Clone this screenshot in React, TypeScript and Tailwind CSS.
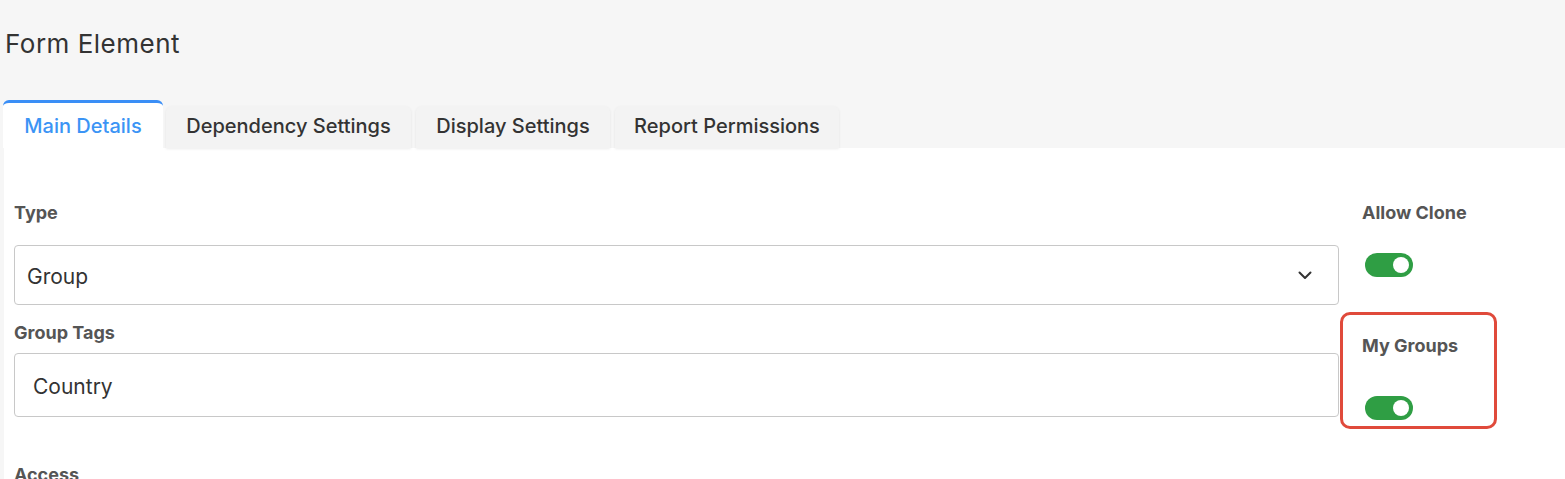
import React from "react";

function Toggle() {
  return (
    <div className="relative h-[24px] w-[48px] rounded-full bg-[#2f9e44]">
      <div className="absolute right-[4px] top-[4px] h-[16px] w-[16px] rounded-full bg-white" />
    </div>
  );
}

export default function App() {
  const tabs = [
    { label: "Dependency Settings", w: "w-[245px]" },
    { label: "Display Settings", w: "w-[194px]" },
    { label: "Report Permissions", w: "w-[224px]" },
  ];
  return (
    <div className="min-h-[479px] bg-[#f6f6f6] font-['Inter',sans-serif]">
      <div className="pl-[5px] pt-[28px] text-[26px] leading-[32px] tracking-[0.5px] text-[#333]">Form Element</div>
      <div className="mt-[40px] flex items-end pl-[3px]">
        <div className="flex h-[48px] w-[160px] items-center justify-center rounded-t-[6px] border-t-[3px] border-[#3a8ef6] bg-white text-[20px] font-medium text-[#3b94f5]">
          Main Details
        </div>
        {tabs.map((t, i) => (
          <div
            key={t.label}
            className={`${t.w} ${i === 0 ? "ml-[3px]" : "ml-[5px]"} flex h-[42px] items-center justify-center rounded-t-[6px] bg-[#f3f3f3] pb-[3px] text-[20px] font-medium text-[#333] shadow-[0_1px_3px_rgba(0,0,0,0.08)]`}
          >
            {t.label}
          </div>
        ))}
      </div>
      <div className="ml-[4px] flex h-[331px] bg-white pl-[10px]">
        <div className="w-[1325px] pt-[53px]">
          <div className="text-[18px] font-bold leading-[24px] text-[#555]">Type</div>
          <div className="mt-[20px] flex h-[60px] items-center justify-between rounded-[4px] border border-[#c8c8c8] pl-[12px] pr-[26px] pt-[3px] text-[21px] text-[#333]">
            <span>Group</span>
            <svg width="14" height="9" viewBox="0 0 14 9" fill="none" className="-mt-[3px]">
              <path d="M1.5 1.5 L7 7 L12.5 1.5" stroke="#333" strokeWidth="2" strokeLinecap="round" strokeLinejoin="round" />
            </svg>
          </div>
          <div className="mt-[16px] text-[18px] font-bold leading-[24px] text-[#555]">Group Tags</div>
          <div className="mt-[8px] flex h-[64px] items-center rounded-[4px] border border-[#c8c8c8] pl-[18px] pt-[3px] text-[21px] text-[#333]">
            Country
          </div>
          <div className="mt-[46px] text-[18px] font-bold leading-[24px] text-[#555]">Access</div>
        </div>
        <div className="w-[157px] ml-[1px] pt-[53px]">
          <div className="pl-[22px] text-[18px] font-bold leading-[24px] text-[#555]">Allow Clone</div>
          <div className="mt-[28px] pl-[25px]">
            <Toggle />
          </div>
          <div className="mt-[35px] h-[117px] rounded-[10px] border-[3px] border-[#e04a3b] pl-[19px] pt-[19px]">
            <div className="text-[18px] font-bold leading-[24px] text-[#555]">My Groups</div>
            <div className="mt-[38px] pl-[3px]">
              <Toggle />
            </div>
          </div>
        </div>
      </div>
    </div>
  );
}
